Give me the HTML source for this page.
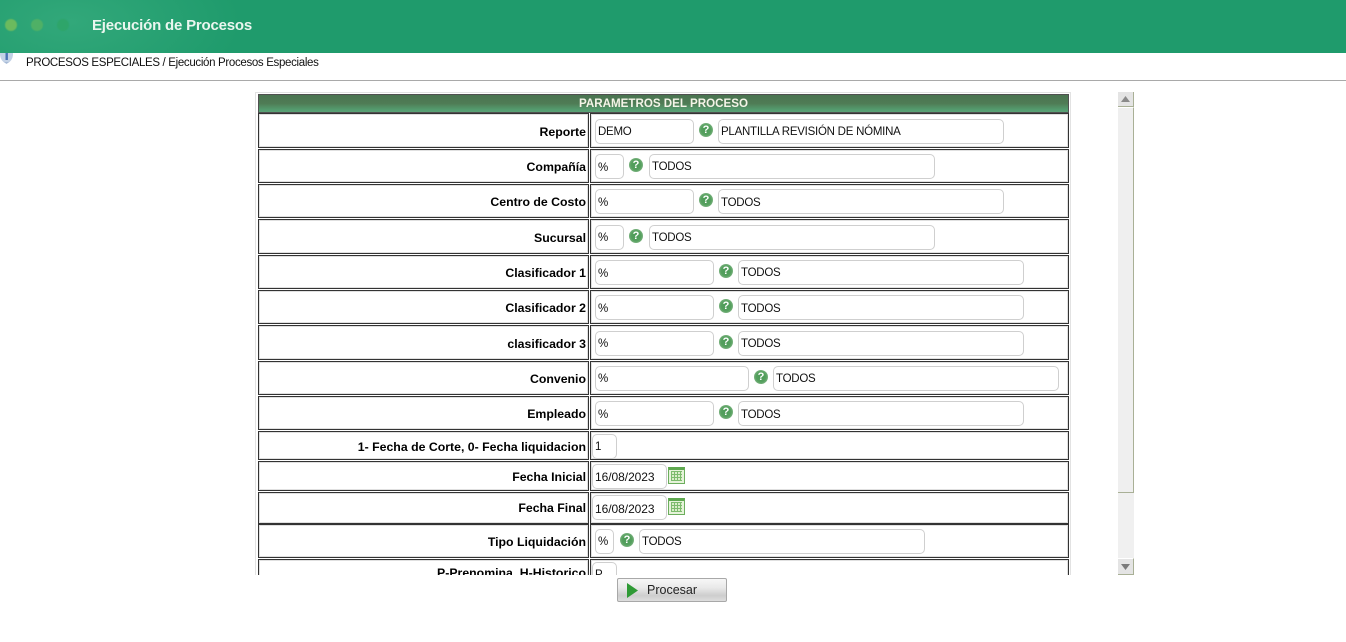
<!DOCTYPE html>
<html><head><meta charset="utf-8">
<style>
html,body{margin:0;padding:0;background:#fff;width:1346px;height:642px;overflow:hidden;font-family:"Liberation Sans",sans-serif;font-size:12px;color:#000}
div,span,svg{position:absolute;box-sizing:border-box}
.hdr{left:0;top:0;width:1346px;height:53px;background:radial-gradient(ellipse 170px 80px at 70px 22px,#32a87a 0%,#1f9b6c 100%),#1f9b6c}
.dot{width:12px;height:12px;border-radius:50%;top:19px;filter:blur(.5px)}
.ttl{left:92px;top:17px;font-size:15px;font-weight:bold;color:#eaf6ef;letter-spacing:-.2px;white-space:nowrap}
.crumb{left:26px;top:56px;white-space:nowrap;color:#111;line-height:15px;font-size:11.5px;letter-spacing:-.33px}
.line{left:0;top:80px;width:1346px;height:1px;background:#a9a9a9}
.clip{left:255px;top:92px;width:816px;height:483px;overflow:hidden;border:1px solid #e2e2e2;border-bottom:0}
.box{border:1px solid #333;box-shadow:inset 0 0 0 1px rgba(0,0,0,.12)}
.l{left:2px;width:331px}
.r{left:334px;width:479px}
.lb{left:0;width:330px;text-align:right;font-weight:bold;font-size:12.3px;white-space:nowrap;line-height:14px}
.i{border:1px solid #cfcfcf;border-radius:5px;background:#fff;padding-left:2px;line-height:14px;color:#111;font-size:11.5px;letter-spacing:-.25px;white-space:nowrap;overflow:hidden}
.d{font-size:12px;letter-spacing:-.05px}
.q{width:14px;height:14px;border-radius:50%;background:radial-gradient(circle at 50% 50%,#4b9a57 0,#55a05e 50%,#a8c8a8 100%);color:#fff;font-weight:bold;font-size:11px;line-height:14px;text-align:center;margin-left:-1px}
.cal{width:17px;height:17px;background:#e6f3da;border:1px solid #6cae5d;border-top:3px solid #5ea84f}
.cal i{position:absolute;left:2px;top:1px;width:11px;height:10px;background:repeating-linear-gradient(90deg,#7dbb6d 0 1px,transparent 1px 3px),repeating-linear-gradient(0deg,#7dbb6d 0 1px,#d9edc9 1px 3px)}
.head{left:2px;top:1px;width:811px;height:19px;border:1px solid #505050;background:linear-gradient(#4a7350 0,#4f7c55 50%,#549b6e 85%,#5aa377 100%);color:#f4f4e8;font-weight:bold;text-align:center;line-height:18px;font-size:11.6px}
.sb{left:1118px;top:92px;width:16px;height:483px;background:#f0f0f0}
.up{left:0;top:0;width:16px;height:15px;background:#e4e4e4;border-bottom:1px solid #a9b096;border-right:1px solid #a9b096}
.th{left:0;top:15px;width:16px;height:386px;background:#efefef;border-bottom:1px solid #a9b096;border-top:1px solid #fff;border-right:1px solid #a9b096}
.dn{left:0;top:466px;width:16px;height:17px;background:#e4e4e4;border-top:1px solid #fff;border-bottom:1px solid #a9b096;border-right:1px solid #a9b096}
.btn{left:617px;top:578px;width:110px;height:24px;border:1px solid #a8a8a8;border-radius:2px;background:linear-gradient(#f7f7f7 0,#e9e9e9 40%,#cdcdcd 75%,#dedede 100%)}
</style></head><body>
<div class="hdr"></div>
<div class="dot" style="left:5px;background:#6cba5e"></div>
<div class="dot" style="left:31px;background:#4fb066"></div>
<div class="dot" style="left:57px;background:#2ea56a"></div>
<div class="ttl">Ejecución de Procesos</div>
<svg style="left:0;top:53px" width="14" height="14" viewBox="0 0 14 14"><path d="M0 0 H13 V2 Q12.5 8 6.5 11 Q.5 8 0 2Z" fill="#c3d2e6"/><path d="M3 8 Q6.5 11 10 8 L6.5 10.5Z" fill="#8fa6c8"/><rect x="5.5" y="0" width="2.4" height="7" fill="#4a72b4"/></svg>
<div class="crumb">PROCESOS ESPECIALES / Ejecución Procesos Especiales</div>
<div class="line"></div>

<div class="clip">
<div class="head">PARAMETROS DEL PROCESO</div>

<div class="box l" style="top:20px;height:35px"></div><div class="box r" style="top:20px;height:35px"></div>
<div class="lb" style="top:32px">Reporte</div>
<div class="i" style="left:339px;top:26px;width:99px;height:25px;padding-top:5px">DEMO</div>
<div class="q" style="left:444px;top:30px">?</div>
<div class="i" style="left:462px;top:26px;width:286px;height:25px;padding-top:5px">PLANTILLA REVISIÓN DE NÓMINA</div>

<div class="box l" style="top:56px;height:34px"></div><div class="box r" style="top:56px;height:34px"></div>
<div class="lb" style="top:67px">Compañía</div>
<div class="i" style="left:339px;top:61px;width:29px;height:25px;padding-top:6px">%</div>
<div class="q" style="left:374px;top:65px">?</div>
<div class="i" style="left:393px;top:61px;width:286px;height:25px;padding-top:5px">TODOS</div>

<div class="box l" style="top:91px;height:34px"></div><div class="box r" style="top:91px;height:34px"></div>
<div class="lb" style="top:102px">Centro de Costo</div>
<div class="i" style="left:339px;top:96px;width:99px;height:25px;padding-top:6px">%</div>
<div class="q" style="left:444px;top:100px">?</div>
<div class="i" style="left:462px;top:96px;width:286px;height:25px;padding-top:6px">TODOS</div>

<div class="box l" style="top:126px;height:35px"></div><div class="box r" style="top:126px;height:35px"></div>
<div class="lb" style="top:138px">Sucursal</div>
<div class="i" style="left:339px;top:132px;width:29px;height:25px;padding-top:5px">%</div>
<div class="q" style="left:374px;top:136px">?</div>
<div class="i" style="left:393px;top:132px;width:286px;height:25px;padding-top:5px">TODOS</div>

<div class="box l" style="top:162px;height:34px"></div><div class="box r" style="top:162px;height:34px"></div>
<div class="lb" style="top:173px">Clasificador 1</div>
<div class="i" style="left:339px;top:167px;width:119px;height:25px;padding-top:6px">%</div>
<div class="q" style="left:464px;top:171px">?</div>
<div class="i" style="left:482px;top:167px;width:286px;height:25px;padding-top:5px">TODOS</div>

<div class="box l" style="top:197px;height:34px"></div><div class="box r" style="top:197px;height:34px"></div>
<div class="lb" style="top:208px">Clasificador 2</div>
<div class="i" style="left:339px;top:202px;width:119px;height:25px;padding-top:6px">%</div>
<div class="q" style="left:464px;top:206px">?</div>
<div class="i" style="left:482px;top:202px;width:286px;height:25px;padding-top:6px">TODOS</div>

<div class="box l" style="top:232px;height:35px"></div><div class="box r" style="top:232px;height:35px"></div>
<div class="lb" style="top:244px">clasificador 3</div>
<div class="i" style="left:339px;top:238px;width:119px;height:25px;padding-top:5px">%</div>
<div class="q" style="left:464px;top:242px">?</div>
<div class="i" style="left:482px;top:238px;width:286px;height:25px;padding-top:5px">TODOS</div>

<div class="box l" style="top:268px;height:34px"></div><div class="box r" style="top:268px;height:34px"></div>
<div class="lb" style="top:279px">Convenio</div>
<div class="i" style="left:339px;top:273px;width:154px;height:25px;padding-top:5px">%</div>
<div class="q" style="left:499px;top:277px">?</div>
<div class="i" style="left:517px;top:273px;width:286px;height:25px;padding-top:5px">TODOS</div>

<div class="box l" style="top:303px;height:34px"></div><div class="box r" style="top:303px;height:34px"></div>
<div class="lb" style="top:314px">Empleado</div>
<div class="i" style="left:339px;top:308px;width:119px;height:25px;padding-top:6px">%</div>
<div class="q" style="left:464px;top:312px">?</div>
<div class="i" style="left:482px;top:308px;width:286px;height:25px;padding-top:6px">TODOS</div>

<div class="box l" style="top:338px;height:29px"></div><div class="box r" style="top:338px;height:29px"></div>
<div class="lb" style="top:347px">1- Fecha de Corte, 0- Fecha liquidacion</div>
<div class="i" style="left:336px;top:341px;width:25px;height:25px;padding-top:5px">1</div>

<div class="box l" style="top:368px;height:30px"></div><div class="box r" style="top:368px;height:30px"></div>
<div class="lb" style="top:377px">Fecha Inicial</div>
<div class="i d" style="left:336px;top:371px;width:75px;height:25px;padding-top:5px">16/08/2023</div>
<div class="cal" style="left:412px;top:374px"><i></i></div>

<div class="box l" style="top:399px;height:32px"></div><div class="box r" style="top:399px;height:32px"></div>
<div class="lb" style="top:408px">Fecha Final</div>
<div class="i d" style="left:336px;top:402px;width:75px;height:25px;padding-top:6px">16/08/2023</div>
<div class="cal" style="left:412px;top:405px"><i></i></div>

<div class="box l" style="top:431px;height:34px"></div><div class="box r" style="top:431px;height:34px"></div>
<div class="lb" style="top:442px">Tipo Liquidación</div>
<div class="i" style="left:339px;top:436px;width:19px;height:25px;padding-top:5px">%</div>
<div class="q" style="left:365px;top:440px">?</div>
<div class="i" style="left:383px;top:436px;width:286px;height:25px;padding-top:5px">TODOS</div>

<div class="box l" style="top:466px;height:35px"></div><div class="box r" style="top:466px;height:35px"></div>
<div class="lb" style="top:473px">P-Prenomina, H-Historico</div>
<div class="i" style="left:336px;top:469px;width:25px;height:25px;padding-top:5px">P</div>
</div>

<div class="sb">
<div class="up"><svg style="left:3px;top:4px" width="9" height="6"><path d="M4.5 0L9 6H0Z" fill="#8a8a8a"/></svg></div>
<div class="th"></div>
<div class="dn"><svg style="left:3px;top:5px" width="9" height="6"><path d="M0 0H9L4.5 6Z" fill="#7a7a7a"/></svg></div>
</div>

<div class="btn">
<svg style="left:9px;top:4px" width="11" height="15"><path d="M0 0L11 7.5L0 15Z" fill="#2f9a35"/></svg>
<span style="left:29px;top:4px;color:#222;font-size:12.5px;line-height:15px;white-space:nowrap">Procesar</span>
</div>
</body></html>
